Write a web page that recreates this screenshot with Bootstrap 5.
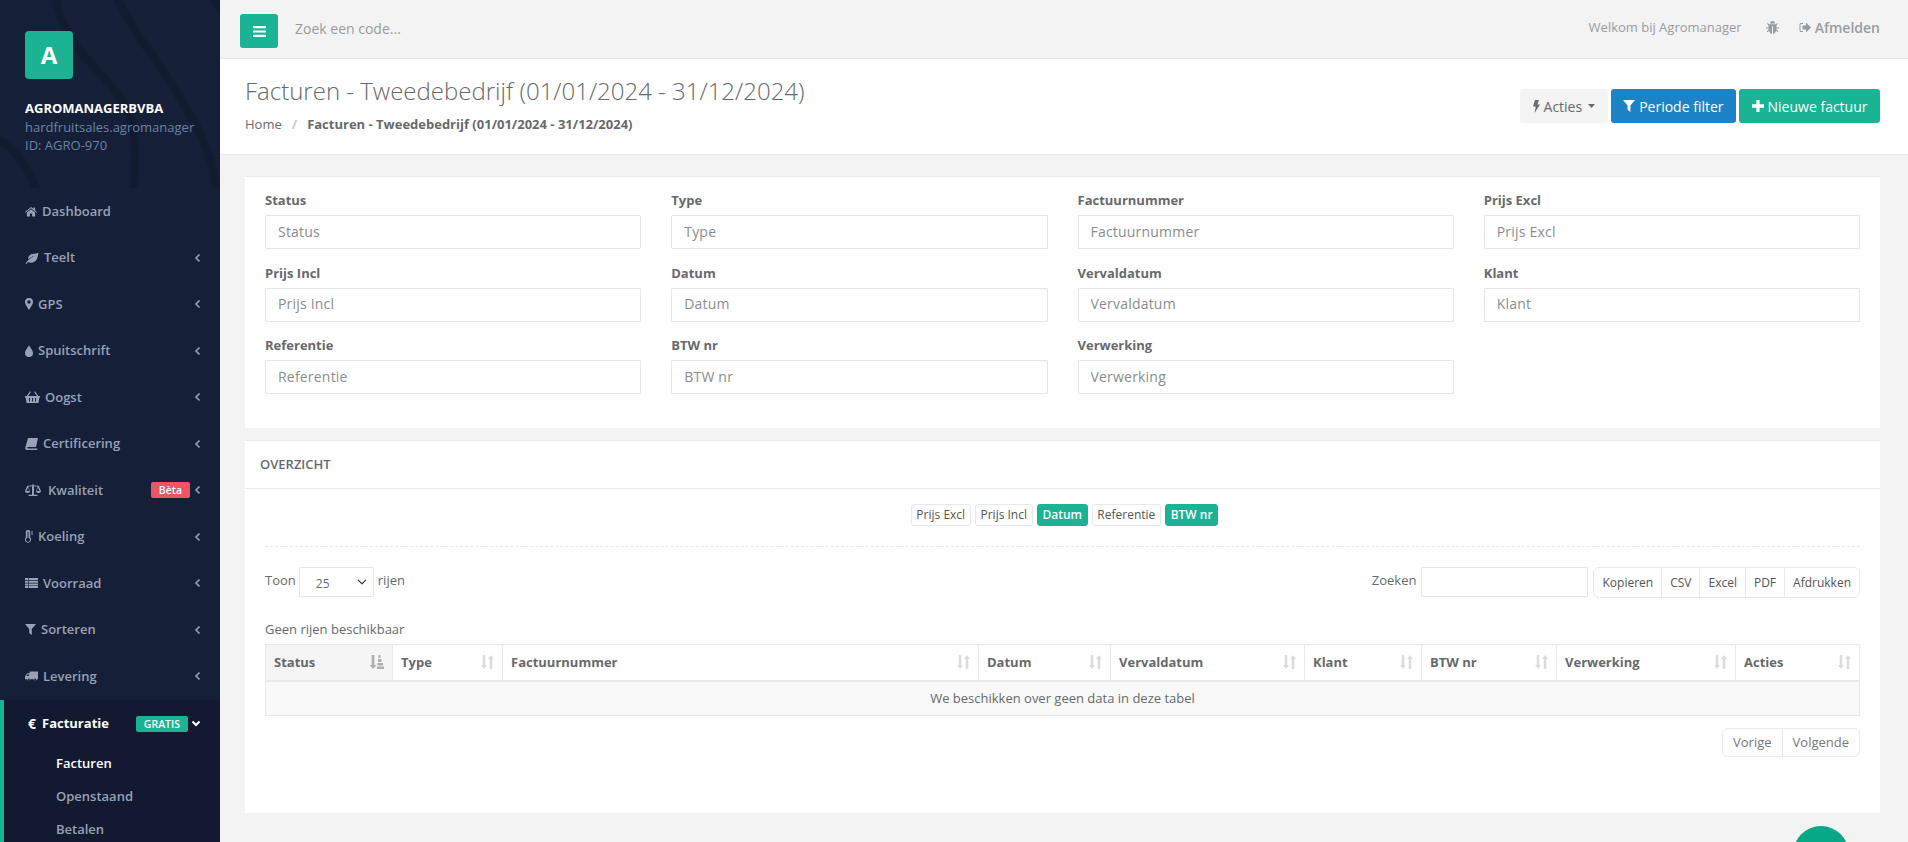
<!DOCTYPE html>
<html lang="nl">
<head>
  <meta charset="UTF-8" />
  <meta name="viewport" content="width=device-width, initial-scale=1.0"/>
  <title>Facturen - Agromanager</title>
  <link href="https://cdn.jsdelivr.net/npm/bootstrap@5.3.0/dist/css/bootstrap.min.css" rel="stylesheet">
  <style>
    html, body { height: 100%; overflow: hidden; }
    body { font-family: "Open Sans", "Liberation Sans", sans-serif; font-size: 13px; color: #676a6c; background: #f3f3f4; }
    .ico { fill: currentColor; flex: none; }
    .side { width: 220px; height: 842px; flex: none; background: #161f38; overflow: hidden; }
    .side-head { height: 188px; padding: 31px 25px 0; position: relative; overflow: hidden; line-height: 18px; color: #6c82a3; }
    .side-head > * { position: relative; }
    .side-waves { position: absolute; left: 0; top: 0; width: 220px; height: 188px; fill: none; stroke: #131b31; stroke-width: 8; }
    .side-logo { width: 48px; height: 48px; background: #1ab394; border-radius: 4px; color: #fff; font-size: 24px; font-weight: 700; margin-bottom: 20px; }
    .side-name { color: #fff; font-weight: 700; margin-bottom: 1px; }
    .side-item { height: 46.5px; padding: 0 19px 0 25px; color: #98a2b6; font-weight: 600; text-decoration: none; }
    .side-item .ico { margin-right: 5px; }
    .side-item .chev { margin: 0 0 0 6px; fill: none; stroke: currentColor; stroke-width: 1.6; }
    .side-open { background: #121930; border-left: 4px solid #1ab394; padding-top: 1px; }
    .side-open .side-item { color: #fff; height: 46px; padding-left: 24px; }
    .euro-sign { font-size: 14px; margin-right: 2px; }
    .side-sub { display: block; color: #98a2b6; font-weight: 600; padding: 0 0 0 52px; height: 33px; line-height: 33px; text-decoration: none; }
    .side-sub.on { color: #fff; }
    .tag { font-size: 10.5px; font-weight: 600; line-height: 16px; height: 16px; padding: 0 8px; border-radius: 2px; color: #fff; }
    .tag-red { background: #ed5565; }
    .tag-green { background: #1ab394; }
    .top-bar { height: 59px; padding: 14px 28px 0 20px; border-bottom: 1px solid #e7eaec; background: #f3f3f4; }
    .btn-menu { width: 38px; height: 34px; background: #1ab394; color: #fff; padding: 0; border: 0; border-radius: 3px; }
    .top-search { border: 0; background: transparent; font-size: 14px; margin-left: 17px; width: 400px; height: 28px; outline: 0; padding: 0; }
    .top-search::placeholder { color: #999c9e; }
    .top-welcome { color: #999c9e; font-size: 13px; }
    .top-out { color: #999c9e; font-size: 14px; font-weight: 600; text-decoration: none; }
    .page-head { height: 96px; background: #fff; padding: 0 28px 0 25px; border-bottom: 1px solid #e7eaec; }
    .page-title { font-size: 24px; font-weight: 300; margin: 0 0 9px; line-height: 30px; color: #676a6c; }
    .crumbs { margin: 0; font-size: 13px; --bs-breadcrumb-divider-color: #ccc; --bs-breadcrumb-item-padding-x: 10px; }
    .crumbs .breadcrumb-item.active { color: #676a6c; font-weight: 700; }
    .crumbs .breadcrumb-item a { color: #676a6c; text-decoration: none; }
    .btn-head { font-size: 14px; height: 34px; padding: 0 12.5px; border-radius: 3px; border: 0; color: #fff; white-space: nowrap; }
    .btn-grey { background: #f3f3f4; color: #676a6c; }
    .btn-blue { background: #1c84c6; }
    .btn-green { background: #1ab394; }
    .body-wrap { padding: 21px 28px 0 25px; }
    .panel { border: 0; border-top: 1px solid #e7eaec; border-radius: 0; background: #fff; }
    .filter-panel { height: 252px; padding: 14px 20px 0; margin-bottom: 12px; }
    .filter-grid { --bs-gutter-x: 30px; --bs-gutter-y: 0; }
    .filter-grid label { display: block; font-weight: 700; margin: 0 0 6px; line-height: 18px; }
    .filter-grid .col-3 { height: 72.5px; }
    .field { height: 34px; border: 1px solid #e5e6e7; border-radius: 1px; font-size: 14px; letter-spacing: .2px; padding: 5px 12px 7px; color: #676a6c; }
    .field::placeholder { color: #8a8d8f; }
    .over-head { height: 48px; padding: 0 15px; border-bottom: 1px solid #e7eaec; font-size: 13px; font-weight: 600; line-height: 47px; }
    .over-body { height: 324px; padding: 15px 20px 0; }
    .pills { gap: 4px; height: 22px; padding-left: 4px; }
    .pill { font-size: 12px; height: 22px; line-height: 20px; padding: 0 4.7px; border: 1px solid #e7eaec; border-radius: 3px; color: #555; background: #fff; }
    .pill.on { background: #1ab394; border-color: #1ab394; color: #fff; font-weight: 600; }
    .dash { border-top: 1px dashed #e7eaec; margin: 20px 0; height: 0; }
    .tools { height: 31px; line-height: 26px; }
    .len-select { width: 75px; height: 30px; border: 1px solid #e5e6e7; border-radius: 1px; font-size: 12px; padding: 3px 20px 0 16px; margin: 0 4px 0 3px; color: #676a6c; background-position: right 5px center; background-size: 12px 10px; }
    .find-input { width: 167px; height: 30px; border: 1px solid #e5e6e7; border-radius: 1px; margin: 0 5px 0 5px; }
    .tool-btn { font-size: 12px; height: 31px; padding: 0 8px; background: #fff; border: 1px solid #e7eaec; color: #555; line-height: 29px; }
    .info-line { margin: 20px 0 0; line-height: 23px; height: 26px; }
    .grid-table { table-layout: fixed; width: 100%; margin: 0; border: 1px solid #e7eaec; border-collapse: collapse; }
    .grid-table th { height: 36px; padding: 0 8px; font-size: 13px; font-weight: 700; color: #676a6c; border: 1px solid #e7eaec; border-bottom-width: 2px; vertical-align: middle; }
    .grid-table td { height: 35px; padding: 0; text-align: center; font-size: 13px; background: #f9f9f9; color: #676a6c; border: 1px solid #e7eaec; vertical-align: middle; }
    .grid-table th:nth-child(1) { width: 127px; background: #f5f5f6; }
    .grid-table th:nth-child(2) { width: 110px; }
    .grid-table th:nth-child(3) { width: 476px; }
    .grid-table th:nth-child(4) { width: 132px; }
    .grid-table th:nth-child(5) { width: 194px; }
    .grid-table th:nth-child(6) { width: 117px; }
    .grid-table th:nth-child(7) { width: 135px; }
    .grid-table th:nth-child(8) { width: 179px; }
    .sort-ico { color: #dcdcdc; }
    .sort-ico.cur { color: #aeaeae; }
    .pager-row { margin-top: 12px; }
    .pager-btn { font-size: 13px; height: 29px; padding: 0 10px; background: #fff; border: 1px solid #e7eaec; color: #777; line-height: 27px; }
    .fab { position: fixed; left: 1793px; top: 826px; width: 56px; height: 56px; border-radius: 50%; background: #06a886; }
  </style>
</head>
<body>
<div class="d-flex">

  <!-- Sidebar -->
  <nav class="side">
    <div class="side-head">
      <svg class="side-waves" viewBox="0 0 220 188"><path d="M55 -5c3 25 14 42 30 62c22 26 48 45 50 85c1 18 0 32-2 50"/><path d="M116 -5c12 30 30 50 46 75c22 34 40 60 48 90c3 10 5 20 7 30"/><path d="M-5 138c18 8 32 25 41 52"/><path d="M213 -5c2 8 6 14 12 20"/></svg>
      <div class="side-logo d-flex align-items-center justify-content-center">A</div>
      <div class="side-name">AGROMANAGERBVBA</div>
      <div>hardfruitsales.agromanager</div>
      <div>ID: AGRO-970</div>
    </div>

    <a class="side-item d-flex align-items-center" href="#"><svg class="ico" width="12" height="11" viewBox="0 0 13 12"><path d="M6.500 1 0 6.600l.7.8L6.500 2.500l5.800 4.900.7-.8-2-1.700V1.500H9.200v1.500zM2 7.300V11.500h3.300V8.300h2.400v3.200H11V7.300L6.500 3.500z"/></svg>Dashboard</a>
    <a class="side-item d-flex align-items-center" href="#"><svg class="ico" width="14" height="12" viewBox="0 0 14 12"><path d="M13.500 .5C12 1.800 10 1.600 7.500 2 4.500 2.400 2.800 4.500 3.200 7.500 5 5.500 7 4.500 9.500 4 7 5 4.500 6.700 2.500 9 1.500 10 .8 11 .5 11.500l1 .5 1.500-2c2.500 1.200 6.500 1 8.500-2.200 1.200-2 1.500-5 2-7.300z"/></svg><span>Teelt</span><svg class="chev ms-auto" width="7" height="10" viewBox="0 0 7 10"><path d="M5.500 1.500 2 5l3.500 3.500"/></svg></a>
    <a class="side-item d-flex align-items-center" href="#"><svg class="ico" width="8" height="12" viewBox="0 0 8 12"><path fill-rule="evenodd" d="M4 0a4 4 0 0 0-4 4c0 2.200 2.800 6 4 8 1.200-2 4-5.800 4-8a4 4 0 0 0-4-4zm0 2.300a1.700 1.700 0 1 1 0 3.400 1.700 1.700 0 0 1 0-3.400z"/></svg><span>GPS</span><svg class="chev ms-auto" width="7" height="10" viewBox="0 0 7 10"><path d="M5.500 1.500 2 5l3.500 3.500"/></svg></a>
    <a class="side-item d-flex align-items-center" href="#"><svg class="ico" width="8" height="12" viewBox="0 0 8 12"><path d="M4 0C3.500 2 0 5 0 8a4 4 0 0 0 8 0C8 5 4.500 2 4 0z"/></svg><span>Spuitschrift</span><svg class="chev ms-auto" width="7" height="10" viewBox="0 0 7 10"><path d="M5.500 1.500 2 5l3.500 3.500"/></svg></a>
    <a class="side-item d-flex align-items-center" href="#"><svg class="ico" width="15" height="12" viewBox="0 0 15 12"><path fill-rule="evenodd" d="M0 5h1.800L5 .3l.9.6L3.200 5h8.600L9.100.9l.9-.6L13.200 5H15v1.500h-.6L13.400 12H1.600L.6 6.500H0zM4 7v3.500h1V7zm3 0v3.500h1V7zm3 0v3.500h1V7z"/></svg><span>Oogst</span><svg class="chev ms-auto" width="7" height="10" viewBox="0 0 7 10"><path d="M5.500 1.500 2 5l3.500 3.500"/></svg></a>
    <a class="side-item d-flex align-items-center" href="#"><svg class="ico" width="13" height="12" viewBox="0 0 13 12"><path d="M3 0h10l-2 9H3C2 9 1.800 10.500 3 10.500h9.500L12 12H2C.5 12 0 10.500.3 9.500z"/></svg><span>Certificering</span><svg class="chev ms-auto" width="7" height="10" viewBox="0 0 7 10"><path d="M5.500 1.500 2 5l3.500 3.500"/></svg></a>
    <a class="side-item d-flex align-items-center" href="#"><svg class="ico" width="16" height="12" viewBox="0 0 16 12" style="margin-right:7px"><path fill-rule="evenodd" d="M7.500 0h1v1.200l4.500.6h1v.8L16 7c0 1.500-1.500 2-2.500 2S11 8.500 11 7l1.700-4.400-3.700-.4V10.800h3.500V12h-9v-1.200H7V2.200l-3.700.4L5 7c0 1.500-1.500 2-2.500 2S0 8.500 0 7l2-4.400V1.800h1l4.500-.6zM3 3.500 1.500 7h3zm10 0L11.500 7h3z"/></svg><span>Kwaliteit</span><span class="tag tag-red ms-auto">Bèta</span><svg class="chev" width="7" height="10" viewBox="0 0 7 10" style="margin-left:4px"><path d="M5.500 1.500 2 5l3.500 3.500"/></svg></a>
    <a class="side-item d-flex align-items-center" href="#"><svg class="ico" width="8" height="13" viewBox="0 0 8 13" style="margin-right:5px"><path fill-rule="evenodd" d="M2.500 0C1.300 0 .8.800.8 1.700V7.500A3 3 0 1 0 5.200 7.500V1.700C5.200.8 4.700 0 3.500 0zM2.300 8l.2-.3V2c0-.7 1-.7 1 0v5.700l.2.300a1.900 1.900 0 1 1-1.400 0zM6 1.500h2v1H6zm0 2h2v1H6z"/></svg><span>Koeling</span><svg class="chev ms-auto" width="7" height="10" viewBox="0 0 7 10"><path d="M5.500 1.500 2 5l3.500 3.500"/></svg></a>
    <a class="side-item d-flex align-items-center" href="#"><svg class="ico" width="13" height="10" viewBox="0 0 13 10"><path d="M0 0h3v2H0zm3.600 0H13v2H3.600zM0 2.700h3v2H0zm3.600 0H13v2H3.600zM0 5.400h3v2H0zm3.600 0H13v2H3.600zM0 8h3v2H0zm3.600 0H13v2H3.600z"/></svg><span>Voorraad</span><svg class="chev ms-auto" width="7" height="10" viewBox="0 0 7 10"><path d="M5.500 1.500 2 5l3.500 3.500"/></svg></a>
    <a class="side-item d-flex align-items-center" href="#"><svg class="ico" width="11" height="11" viewBox="0 0 11 11"><path d="M0 0h11L6.800 5v6L4.200 9V5z"/></svg><span>Sorteren</span><svg class="chev ms-auto" width="7" height="10" viewBox="0 0 7 10"><path d="M5.500 1.500 2 5l3.500 3.500"/></svg></a>
    <a class="side-item d-flex align-items-center" href="#"><svg class="ico" width="13" height="11" viewBox="0 0 14 11"><path fill-rule="evenodd" d="M14 0v8.500h-1.200a1.800 1.800 0 0 1-3.500 0H5.700a1.800 1.800 0 0 1-3.500 0H0V5l2.500-3H5V0zM3 3 1.300 5H4V3zM4 7.600a1 1 0 1 0 0 2 1 1 0 0 0 0-2zm7 0a1 1 0 1 0 0 2 1 1 0 0 0 0-2z"/></svg><span>Levering</span><svg class="chev ms-auto" width="7" height="10" viewBox="0 0 7 10"><path d="M5.500 1.500 2 5l3.500 3.500"/></svg></a>

    <div class="side-open">
      <a class="side-item d-flex align-items-center" href="#"><span class="fw-bold euro-sign">€</span><span class="fw-bold ms-1">Facturatie</span><span class="tag tag-green ms-auto">GRATIS</span><svg class="chev" width="10" height="7" viewBox="0 0 10 7" style="margin-left:3px;stroke-width:2"><path d="M1.500 1.500 5 5l3.500-3.500"/></svg></a>
      <a class="side-sub on" href="#">Facturen</a>
      <a class="side-sub" href="#">Openstaand</a>
      <a class="side-sub" href="#">Betalen</a>
    </div>
  </nav>

  <div class="flex-grow-1">
    <!-- Topbar -->
    <div class="top-bar d-flex align-items-start">
      <button class="btn btn-menu d-flex align-items-center justify-content-center" type="button"><svg class="ico" width="13" height="11" viewBox="0 0 13 11"><path d="M0 0h13v2.200H0zm0 4.400h13v2.200H0zm0 4.400h13V11H0z"/></svg></button>
      <input class="top-search" type="text" placeholder="Zoek een code...">
      <div class="ms-auto d-flex align-items-center" style="height:27px">
        <span class="top-welcome">Welkom bij Agromanager</span>
        <svg class="ico ms-4" width="13" height="13" viewBox="0 0 13 13" style="color:#999c9e"><path d="M4 2.500a2.500 2.500 0 0 1 5 0zM3 3.200h7l1.200-1.200.7.700-1.400 1.500V6.500H13v1h-2.500v1.200L12.300 10.500l-.7.700-1.500-1.500C9.500 11.500 8 13 7 13V5.500H6V13c-1 0-2.500-1.500-3.100-3.300l-1.500 1.500-.7-.7L2.500 8.700V7.500H0v-1h2.500V4.500L1.100 2.700l.7-.7z"/></svg>
        <a class="top-out d-flex align-items-center" style="margin-left:20px" href="#"><svg class="ico me-1" width="12" height="11" viewBox="0 0 12 11"><path d="M4 1H2C1 1 .5 1.700.5 2.500v6C.5 9.300 1 10 2 10h2V9H2c-.3 0-.5-.2-.5-.5v-6c0-.3.200-.5.500-.5h2zM7 .5 12 5.500l-5 5V7.500H3.500v-4H7z"/></svg>Afmelden</a>
      </div>
    </div>

    <!-- Page heading -->
    <div class="page-head d-flex align-items-center">
      <div style="margin-top:-2px">
        <h2 class="page-title">Facturen - Tweedebedrijf (01/01/2024 - 31/12/2024)</h2>
        <ol class="breadcrumb crumbs">
          <li class="breadcrumb-item"><a href="#">Home</a></li>
          <li class="breadcrumb-item active">Facturen - Tweedebedrijf (01/01/2024 - 31/12/2024)</li>
        </ol>
      </div>
      <div class="ms-auto d-flex" style="gap:3px;margin-top:-1px">
        <button class="btn btn-head btn-grey d-flex align-items-center" type="button"><svg class="ico me-1" width="7" height="13" viewBox="0 0 7 13"><path d="M2 0h4L4.300 4.500H7L1.500 13l1.300-6.500H0z"/></svg>Acties<svg class="ico" width="7" height="4" viewBox="0 0 7 4" style="margin-left:6px"><path d="M0 0h7L3.500 4z"/></svg></button>
        <button class="btn btn-head btn-blue d-flex align-items-center" type="button"><svg class="ico me-1" width="12" height="12" viewBox="0 0 11 11"><path d="M0 0h11L6.800 5v6L4.200 9V5z"/></svg>Periode filter</button>
        <button class="btn btn-head btn-green d-flex align-items-center" type="button"><svg class="ico me-1" width="12" height="12" viewBox="0 0 11 11"><path d="M4 0h3v4h4v3H7v4H4V7H0V4h4z"/></svg>Nieuwe factuur</button>
      </div>
    </div>

    <div class="body-wrap">
      <!-- Filters -->
      <div class="panel filter-panel">
        <div class="row filter-grid">
          <div class="col-3"><label>Status</label><input class="form-control field" placeholder="Status"></div>
          <div class="col-3"><label>Type</label><input class="form-control field" placeholder="Type"></div>
          <div class="col-3"><label>Factuurnummer</label><input class="form-control field" placeholder="Factuurnummer"></div>
          <div class="col-3"><label>Prijs Excl</label><input class="form-control field" placeholder="Prijs Excl"></div>
          <div class="col-3"><label>Prijs Incl</label><input class="form-control field" placeholder="Prijs Incl"></div>
          <div class="col-3"><label>Datum</label><input class="form-control field" placeholder="Datum"></div>
          <div class="col-3"><label>Vervaldatum</label><input class="form-control field" placeholder="Vervaldatum"></div>
          <div class="col-3"><label>Klant</label><input class="form-control field" placeholder="Klant"></div>
          <div class="col-3"><label>Referentie</label><input class="form-control field" placeholder="Referentie"></div>
          <div class="col-3"><label>BTW nr</label><input class="form-control field" placeholder="BTW nr"></div>
          <div class="col-3"><label>Verwerking</label><input class="form-control field" placeholder="Verwerking"></div>
        </div>
      </div>

      <!-- Overzicht -->
      <div class="panel">
        <div class="over-head">OVERZICHT</div>
        <div class="over-body">
          <div class="d-flex justify-content-center pills">
            <span class="pill">Prijs Excl</span><span class="pill">Prijs Incl</span><span class="pill on">Datum</span><span class="pill">Referentie</span><span class="pill on">BTW nr</span>
          </div>
          <div class="dash"></div>

          <div class="d-flex tools">
            <div class="d-flex align-items-start">Toon <select class="form-select len-select"><option>25</option></select> rijen</div>
            <div class="ms-auto d-flex align-items-start">
              Zoeken <input class="form-control find-input" type="search">
              <div class="btn-group">
                <button class="btn tool-btn" type="button">Kopieren</button>
                <button class="btn tool-btn" type="button">CSV</button>
                <button class="btn tool-btn" type="button">Excel</button>
                <button class="btn tool-btn" type="button">PDF</button>
                <button class="btn tool-btn" type="button">Afdrukken</button>
              </div>
            </div>
          </div>

          <p class="info-line">Geen rijen beschikbaar</p>

          <table class="table grid-table">
            <thead>
              <tr>
                <th><div class="d-flex align-items-center justify-content-between">Status<svg class="ico sort-ico cur" width="14" height="14" viewBox="0 0 14 14"><path d="M1.700 0h2.600v10H6.500L3 14-.5 10h2.200zM8.500 0h2v3h-2zM8 4h3.500v3H8zM7.500 8H13v2.500H7.500zM7 11.500h7V14H7z"/></svg></div></th>
                <th><div class="d-flex align-items-center justify-content-between">Type<svg class="ico sort-ico" width="13" height="14" viewBox="0 0 13 14"><path d="M1.700 0h2.600v10H6L3 14 0 10h1.700zM8.700 14h2.600V4H13L10 0 7 4h1.700z"/></svg></div></th>
                <th><div class="d-flex align-items-center justify-content-between">Factuurnummer<svg class="ico sort-ico" width="13" height="14" viewBox="0 0 13 14"><path d="M1.700 0h2.600v10H6L3 14 0 10h1.700zM8.700 14h2.600V4H13L10 0 7 4h1.700z"/></svg></div></th>
                <th><div class="d-flex align-items-center justify-content-between">Datum<svg class="ico sort-ico" width="13" height="14" viewBox="0 0 13 14"><path d="M1.700 0h2.600v10H6L3 14 0 10h1.700zM8.700 14h2.600V4H13L10 0 7 4h1.700z"/></svg></div></th>
                <th><div class="d-flex align-items-center justify-content-between">Vervaldatum<svg class="ico sort-ico" width="13" height="14" viewBox="0 0 13 14"><path d="M1.700 0h2.600v10H6L3 14 0 10h1.700zM8.700 14h2.600V4H13L10 0 7 4h1.700z"/></svg></div></th>
                <th><div class="d-flex align-items-center justify-content-between">Klant<svg class="ico sort-ico" width="13" height="14" viewBox="0 0 13 14"><path d="M1.700 0h2.600v10H6L3 14 0 10h1.700zM8.700 14h2.600V4H13L10 0 7 4h1.700z"/></svg></div></th>
                <th><div class="d-flex align-items-center justify-content-between">BTW nr<svg class="ico sort-ico" width="13" height="14" viewBox="0 0 13 14"><path d="M1.700 0h2.600v10H6L3 14 0 10h1.700zM8.700 14h2.600V4H13L10 0 7 4h1.700z"/></svg></div></th>
                <th><div class="d-flex align-items-center justify-content-between">Verwerking<svg class="ico sort-ico" width="13" height="14" viewBox="0 0 13 14"><path d="M1.700 0h2.600v10H6L3 14 0 10h1.700zM8.700 14h2.600V4H13L10 0 7 4h1.700z"/></svg></div></th>
                <th><div class="d-flex align-items-center justify-content-between">Acties<svg class="ico sort-ico" width="13" height="14" viewBox="0 0 13 14"><path d="M1.700 0h2.600v10H6L3 14 0 10h1.700zM8.700 14h2.600V4H13L10 0 7 4h1.700z"/></svg></div></th>
              </tr>
            </thead>
            <tbody>
              <tr><td colspan="9">We beschikken over geen data in deze tabel</td></tr>
            </tbody>
          </table>

          <div class="d-flex justify-content-end pager-row">
            <div class="btn-group">
              <button class="btn pager-btn" type="button">Vorige</button>
              <button class="btn pager-btn" type="button">Volgende</button>
            </div>
          </div>
        </div>
      </div>
    </div>
  </div>
</div>
<div class="fab"></div>
<script src="https://cdn.jsdelivr.net/npm/bootstrap@5.3.0/dist/js/bootstrap.bundle.min.js"></script>
</body>
</html>
